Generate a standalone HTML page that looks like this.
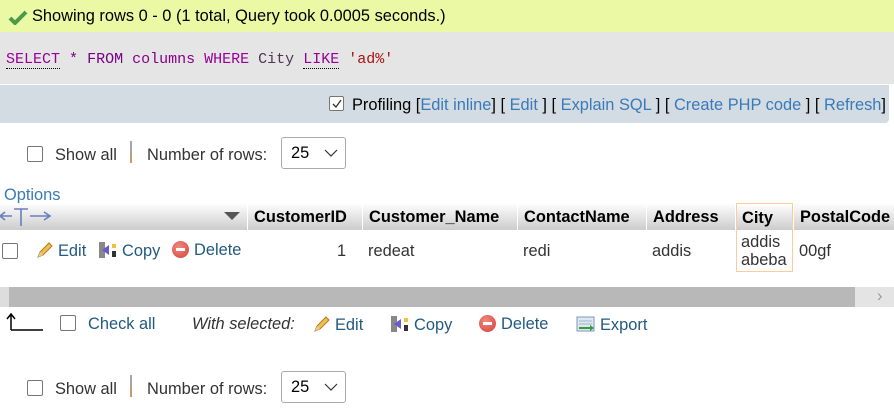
<!DOCTYPE html>
<html><head><meta charset="utf-8"><style>
*{margin:0;padding:0;box-sizing:border-box}
body{width:894px;height:416px;overflow:hidden;background:#fff;font-family:"Liberation Sans",Arial,sans-serif;font-size:16.4px;color:#333;position:relative}
.a{position:absolute;white-space:nowrap}
.l{color:#235a81}
.cb{position:absolute;width:16px;height:16px;border:1px solid #767676;background:#fff;border-radius:2px}
.th{position:absolute;top:203px;height:27px;background:linear-gradient(#fff,#ccc);font-weight:bold;color:#000;padding:5px 6px;font-size:16.4px}
.mono{font-family:"Liberation Mono",monospace;font-size:15px}
.sel{position:absolute;width:65px;height:32px;border:1px solid #aaa;border-radius:3px;background:#fff;padding:6px 9px;color:#000}
.pen{display:inline-block;width:18px;height:18px;vertical-align:-3px;margin-right:4px}
.del{display:inline-block;width:17px;height:17px;border-radius:50%;background:radial-gradient(circle at 40% 35%,#f08a80,#d6403a);vertical-align:-3px;margin-right:5px;position:relative}
.del:after{content:"";position:absolute;left:4px;top:7px;width:9px;height:3px;background:#fff}
.cp{display:inline-block;width:20px;height:18px;vertical-align:-3px;margin-right:4px}
</style></head><body>
<div class="a" style="left:0;top:0;width:894px;height:32px;background:#ebf8a4"></div>
<svg class="a" style="left:8px;top:9px" width="20" height="16"><path d="M2 9 L7 14 L18 3" stroke="#4a9a4a" stroke-width="4" fill="none"/></svg>
<div class="a" style="left:32px;top:7px;color:#000">Showing rows 0 - 0 (1 total, Query took 0.0005 seconds.)</div>
<div class="a" style="left:0;top:32px;width:894px;height:52px;background:#e5e5e5"></div>
<div class="a mono" style="left:6px;top:51px"><span style="color:#909;border-bottom:1px dotted #000">SELECT</span> <span style="color:#708">*</span> <span style="color:#708">FROM</span> <span style="color:#808">columns</span> <span style="color:#909">WHERE</span> <span style="color:#535">City</span> <span style="color:#909;border-bottom:1px dotted #000">LIKE</span> <span style="color:#a11">'ad%'</span></div>
<div class="a" style="left:0;top:85px;width:889px;height:38px;background:#d3dce3;border-radius:0 0 4px 0"></div>
<div class="cb" style="left:329px;top:96px;width:15px;height:15px"></div>
<svg class="a" style="left:331px;top:98px" width="12" height="12"><path d="M2 6 L5 9 L10 2" stroke="#333" stroke-width="1.3" fill="none"/></svg>
<div class="a" style="left:352px;top:96px;color:#000">Profiling [<span style="color:#3a7ab8">Edit inline</span>] [ <span style="color:#3a7ab8">Edit</span> ] [ <span style="color:#3a7ab8">Explain SQL</span> ] [ <span style="color:#3a7ab8">Create PHP code</span> ] [ <span style="color:#3a7ab8">Refresh</span>]</div>

<div class="cb" style="left:27px;top:146px"></div>
<div class="a" style="left:55px;top:146px">Show all</div>
<div class="a" style="left:130px;top:141px;width:2px;height:22px;background:linear-gradient(#9ab,#c96)"></div>
<div class="a" style="left:147px;top:146px">Number of rows:</div>
<div class="sel" style="left:281px;top:137px">25</div>
<svg class="a" style="left:324px;top:148px" width="14" height="10"><path d="M1 2 L7 8 L13 2" stroke="#333" stroke-width="1.2" fill="none"/></svg>

<div class="a" style="left:4px;top:186px;color:#3a7ab8">Options</div>
<div class="a" style="left:0;top:203px;width:247px;height:27px;background:linear-gradient(#fff,#ccc)"></div>
<svg class="a" style="left:0;top:205px" width="56" height="24"><path d="M0 11 H12 M5 7 L0 11 L5 15 M14 4 H28 M21 4 V21 M30 11 H50 M44 7 L50 11 L44 15" stroke="#6a7ec0" stroke-width="1.6" fill="none"/></svg>
<svg class="a" style="left:224px;top:212px" width="16" height="9"><path d="M0 0 L16 0 L8 8Z" fill="#555"/></svg>
<div class="th" style="left:248px;width:114px">CustomerID</div>
<div class="th" style="left:363px;width:154px">Customer_Name</div>
<div class="th" style="left:518px;width:128px">ContactName</div>
<div class="th" style="left:647px;width:88px">Address</div>
<div class="th" style="left:736px;width:57px;border:1px solid #fc9;border-bottom:none;padding-left:5px">City</div>
<div class="th" style="left:794px;width:100px">PostalCode</div>
<div class="a" style="left:736px;top:230px;width:57px;height:42px;border:1px solid #fc9;border-top:none"></div>

<div class="cb" style="left:2px;top:243px"></div>
<div class="a l" style="left:36px;top:241px"><svg class="pen" viewBox="0 0 18 18"><path d="M2 16 L4 11 L13 2 L16 5 L7 14Z" fill="#f0c050" stroke="#b07820"/><path d="M2 16 L4 11 L7 14Z" fill="#e9c9a0"/></svg>Edit</div>
<div class="a l" style="left:98px;top:241px"><svg class="cp" viewBox="0 0 20 18"><rect x="1" y="1" width="6" height="16" fill="#888"/><path d="M4 9 L11 4 L11 14Z" fill="#6a5acd"/><rect x="14" y="3" width="4" height="4" fill="#f0c040"/><rect x="14" y="10" width="4" height="6" fill="#333"/></svg>Copy</div>
<div class="a l" style="left:172px;top:241px"><span class="del"></span>Delete</div>
<div class="a" style="left:337px;top:242px">1</div>
<div class="a" style="left:368px;top:242px">redeat</div>
<div class="a" style="left:523px;top:242px">redi</div>
<div class="a" style="left:652px;top:242px">addis</div>
<div class="a" style="left:741px;top:233px;line-height:18px">addis<br>abeba</div>
<div class="a" style="left:799px;top:242px">00gf</div>

<div class="a" style="left:0;top:287px;width:894px;height:20px;background:#b8b8b8"></div>
<div class="a" style="left:0;top:287px;width:9px;height:20px;background:#ddd"></div>
<div class="a" style="left:855px;top:287px;width:39px;height:20px;background:#e4e4e4"></div>
<div class="a" style="left:877px;top:287px;color:#999">›</div>

<svg class="a" style="left:5px;top:312px" width="38" height="20"><path d="M6 18 L6 3 M2 7 L6 2 L10 7 M6 18 L38 18" stroke="#000" stroke-width="1.5" fill="none"/></svg>
<div class="cb" style="left:60px;top:315px"></div>
<div class="a l" style="left:88px;top:315px">Check all</div>
<div class="a" style="left:192px;top:315px;font-style:italic">With selected:</div>
<div class="a l" style="left:313px;top:315px"><svg class="pen" viewBox="0 0 18 18"><path d="M2 16 L4 11 L13 2 L16 5 L7 14Z" fill="#f0c050" stroke="#b07820"/><path d="M2 16 L4 11 L7 14Z" fill="#e9c9a0"/></svg>Edit</div>
<div class="a l" style="left:390px;top:315px"><svg class="cp" viewBox="0 0 20 18"><rect x="1" y="1" width="6" height="16" fill="#888"/><path d="M4 9 L11 4 L11 14Z" fill="#6a5acd"/><rect x="14" y="3" width="4" height="4" fill="#f0c040"/><rect x="14" y="10" width="4" height="6" fill="#333"/></svg>Copy</div>
<div class="a l" style="left:479px;top:315px"><span class="del"></span>Delete</div>
<div class="a l" style="left:576px;top:315px"><svg class="cp" viewBox="0 0 20 18"><rect x="1" y="2" width="17" height="14" fill="#dde8f0" stroke="#7a9ac0"/><path d="M3 6 H16 M3 9 H16" stroke="#a0b8d0"/><path d="M3 12 H14 L14 10 L18 13 L14 16 L14 14 H3Z" fill="#3a9a3a"/></svg>Export</div>

<div class="cb" style="left:27px;top:380px"></div>
<div class="a" style="left:55px;top:380px">Show all</div>
<div class="a" style="left:130px;top:375px;width:2px;height:22px;background:linear-gradient(#9ab,#c96)"></div>
<div class="a" style="left:147px;top:380px">Number of rows:</div>
<div class="sel" style="left:281px;top:371px">25</div>
<svg class="a" style="left:324px;top:382px" width="14" height="10"><path d="M1 2 L7 8 L13 2" stroke="#333" stroke-width="1.2" fill="none"/></svg>
</body></html>
